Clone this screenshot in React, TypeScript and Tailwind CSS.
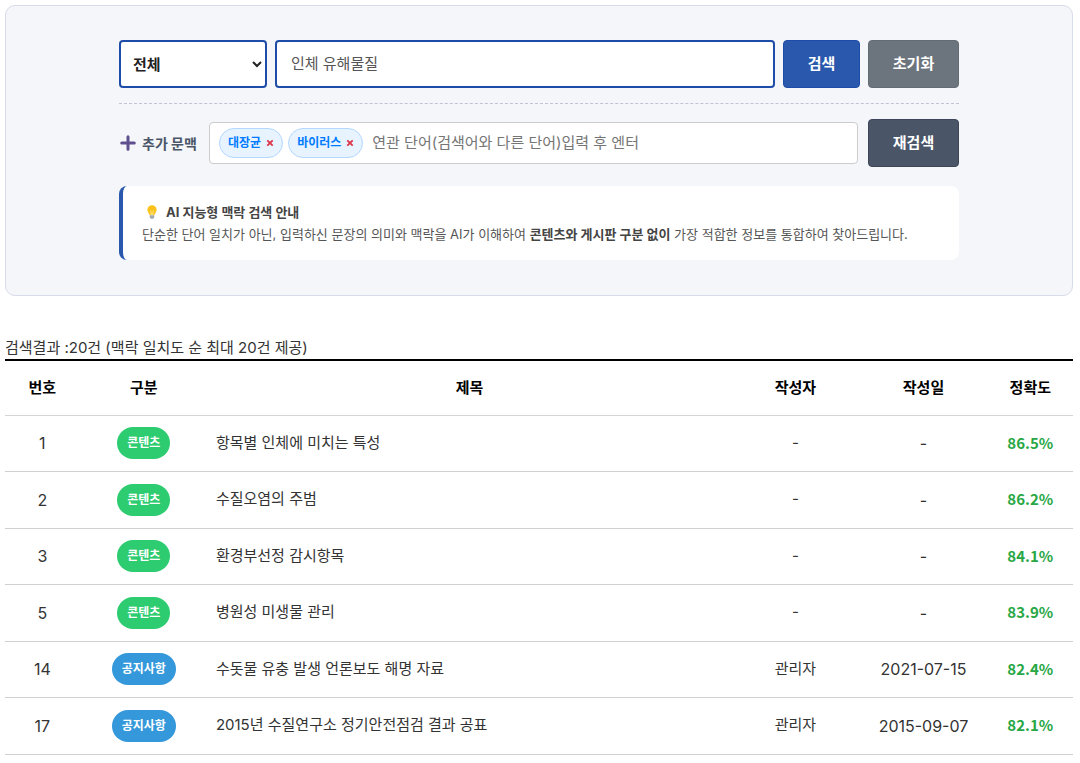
type Row = {
    no: number;
    type: string;
    title: string;
    writer: string;
    date: string;
    score: string;
};

const rows: Row[] = [
    { no: 1, type: '콘텐츠', title: '항목별 인체에 미치는 특성', writer: '-', date: '-', score: '86.5%' },
    { no: 2, type: '콘텐츠', title: '수질오염의 주범', writer: '-', date: '-', score: '86.2%' },
    { no: 3, type: '콘텐츠', title: '환경부선정 감시항목', writer: '-', date: '-', score: '84.1%' },
    { no: 5, type: '콘텐츠', title: '병원성 미생물 관리', writer: '-', date: '-', score: '83.9%' },
    { no: 14, type: '공지사항', title: '수돗물 유충 발생 언론보도 해명 자료', writer: '관리자', date: '2021-07-15', score: '82.4%' },
    { no: 17, type: '공지사항', title: '2015년 수질연구소 정기안전점검 결과 공표', writer: '관리자', date: '2015-09-07', score: '82.1%' },
];

const tags = ['대장균', '바이러스'];

function PlusIcon() {
    return (
        <svg viewBox="0 0 16 16" className="size-4 shrink-0" aria-hidden="true">
            <path d="M8 1.7v12.6M1.7 8h12.6" stroke="#5f4f8f" strokeWidth="3" strokeLinecap="round" />
        </svg>
    );
}

function BulbIcon() {
    return (
        <svg viewBox="0 0 12 16" className="h-4 w-3 shrink-0" aria-hidden="true">
            <path d="M6 1.2a4.6 4.6 0 0 0-4.6 4.6c0 2.2 1.7 3.1 2.2 5.4h4.8c.5-2.3 2.2-3.2 2.2-5.4A4.6 4.6 0 0 0 6 1.2z" fill="#fcc21b" />
            <path d="M4.6 6.6 5.4 11h1.2l.8-4.4" fill="none" stroke="#fff0a8" strokeWidth=".8" />
            <path d="M3.8 11.2h4.4v2.2L7.2 14.8H4.8l-1-1.4z" fill="#a3a9b0" />
        </svg>
    );
}

function RemoveIcon() {
    return (
        <svg viewBox="0 0 8 8" className="size-2" aria-hidden="true">
            <path d="M1.3 1.3l5.4 5.4M6.7 1.3L1.3 6.7" stroke="#dc3545" strokeWidth="1.8" />
        </svg>
    );
}

function SearchPanel() {
    return (
        <section className="rounded-[10px] border border-[#d8dbe9] bg-[#f4f6fa] px-4 pt-[34px] pb-[35px]">
            <form className="mx-auto max-w-[840px]" onSubmit={(e) => e.preventDefault()}>
                <div className="flex h-12 gap-2">
                    <select
                        aria-label="검색 구분"
                        className="w-[148px] rounded border-2 border-[#1d4da8] bg-white pl-2 text-[15px] font-bold text-[#222]"
                    >
                        <option>전체</option>
                        <option>콘텐츠</option>
                        <option>공지사항</option>
                    </select>
                    <input
                        type="text"
                        aria-label="검색어"
                        defaultValue="인체 유해물질"
                        className="min-w-0 flex-1 rounded border-2 border-[#1d4da8] bg-white px-3.5 text-[15px] text-[#555]"
                    />
                    <button type="submit" className="w-[77px] rounded border border-[#1d4da8] bg-[#2a58ad] text-[15px] font-bold text-white">
                        검색
                    </button>
                    <button type="reset" className="w-[91px] rounded border border-[#636b73] bg-[#6c757d] text-[15px] font-bold text-white">
                        초기화
                    </button>
                </div>

                <div className="mt-[15px] flex items-center border-t border-dashed border-[#c2c2d2] pt-[15px]">
                    <label htmlFor="context" className="flex w-[90px] shrink-0 items-center gap-1.5 pl-px text-[14px] font-bold text-[#4a5568]">
                        <PlusIcon />
                        추가 문맥
                    </label>
                    <div className="flex h-[42px] min-w-0 flex-1 items-center gap-[5px] rounded border border-[#ccc] bg-white px-[9px]">
                        {tags.map((tag) => (
                            <span
                                key={tag}
                                className="flex h-[30px] shrink-0 items-center gap-[5px] rounded-full border border-[#b3d7ff] bg-[#e7f3ff] px-2 text-[12px] font-bold text-[#007bff]"
                            >
                                {tag}
                                <button type="button" aria-label={`${tag} 삭제`}>
                                    <RemoveIcon />
                                </button>
                            </span>
                        ))}
                        <input
                            id="context"
                            type="text"
                            placeholder="연관 단어(검색어와 다른 단어)입력 후 엔터"
                            className="ml-1 min-w-0 flex-1 text-[15px] placeholder:text-[#757575]"
                        />
                    </div>
                    <button type="button" className="ml-2.5 h-12 w-[91px] rounded border border-[#3c4658] bg-[#4a5568] text-[15px] font-bold text-white">
                        재검색
                    </button>
                </div>

                <div className="mt-[19px] rounded-lg border-l-4 border-[#2a58ad] bg-white px-[19px] py-[15px] text-[13px] leading-[22px] text-[#555]">
                    <p className="flex items-center gap-2 pl-1 font-bold text-[#444]">
                        <BulbIcon />
                        AI 지능형 맥락 검색 안내
                    </p>
                    <p>
                        단순한 단어 일치가 아닌, 입력하신 문장의 의미와 맥락을 AI가 이해하여{' '}
                        <strong className="text-[#444]">콘텐츠와 게시판 구분 없이</strong> 가장 적합한 정보를 통합하여 찾아드립니다.
                    </p>
                </div>
            </form>
        </section>
    );
}

function ResultTable() {
    return (
        <table className="w-full table-fixed border-t-2 border-black text-center text-[15px] text-[#333]">
            <colgroup>
                <col className="w-[7%]" />
                <col className="w-[12%]" />
                <col />
                <col className="w-[12%]" />
                <col className="w-[12%]" />
                <col className="w-[8%]" />
            </colgroup>
            <thead>
                <tr className="h-[55px] border-b border-[#d5d5d5] text-black">
                    <th>번호</th>
                    <th>구분</th>
                    <th>제목</th>
                    <th>작성자</th>
                    <th>작성일</th>
                    <th>정확도</th>
                </tr>
            </thead>
            <tbody>
                {rows.map((row) => (
                    <tr key={row.no} className="h-14 border-b border-[#d0d0d0] even:h-[57px]">
                        <td className="text-[16px]">{row.no}</td>
                        <td>
                            <span
                                className={`inline-flex h-8 items-center rounded-full px-2.5 text-[12px] font-bold text-white ${
                                    row.type === '콘텐츠' ? 'bg-[#2ecc71]' : 'bg-[#3498db]'
                                }`}
                            >
                                {row.type}
                            </span>
                        </td>
                        <td className="px-2 text-left">
                            <a href="#" className="text-[#333]">
                                {row.title}
                            </a>
                        </td>
                        <td>{row.writer}</td>
                        <td className="text-[16px]">{row.date}</td>
                        <td className="font-['Noto_Sans_CJK_KR',sans-serif] font-bold text-[#28a745]">{row.score}</td>
                    </tr>
                ))}
            </tbody>
        </table>
    );
}

export default function App() {
    return (
        <main className="bg-white pt-[5px] pr-[7px] pl-[5px] font-['Inter','Noto_Sans_CJK_KR',sans-serif]">
            <SearchPanel />
            <p className="mt-10 text-[15px] leading-[23px] text-[#333]">검색결과 :20건 (맥락 일치도 순 최대 20건 제공)</p>
            <ResultTable />
        </main>
    );
}
